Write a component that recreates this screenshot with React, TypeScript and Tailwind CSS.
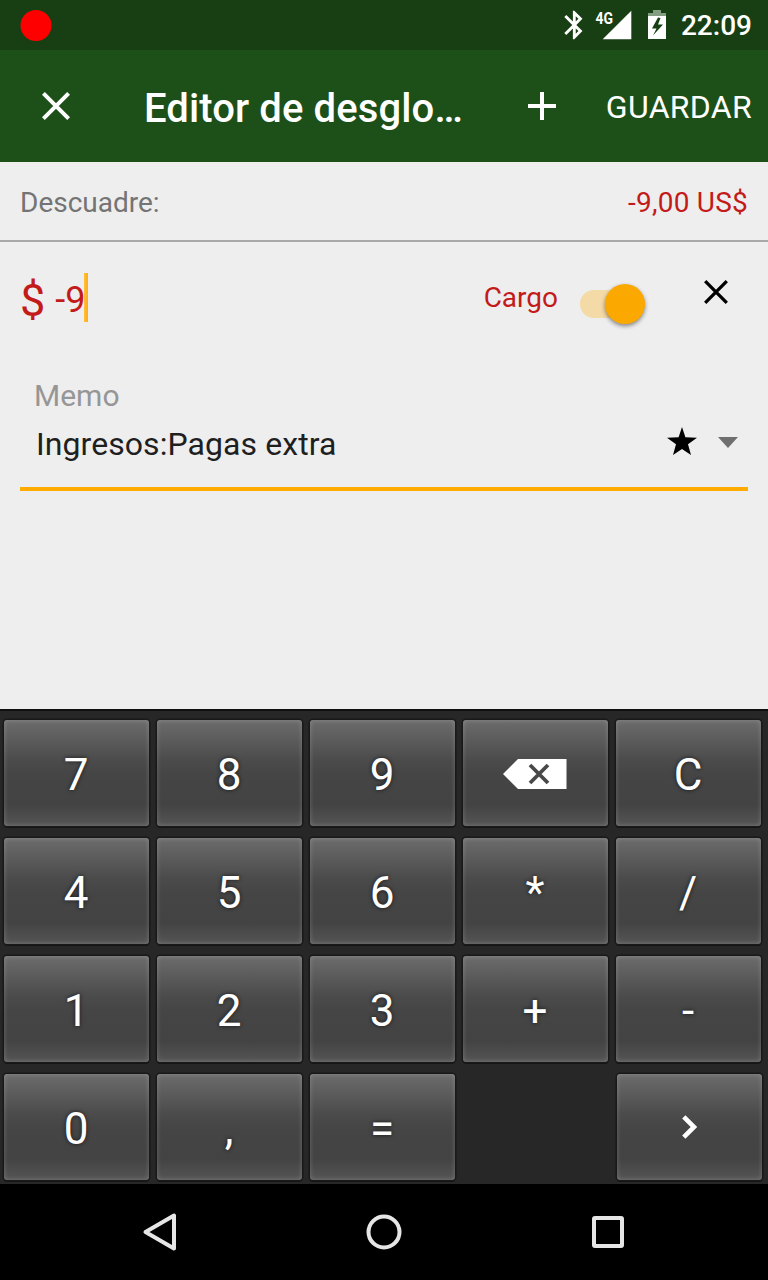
import React from "react";

const KEY =
  "flex h-[106px] w-[145px] items-center justify-center rounded-[3px] bg-[linear-gradient(180deg,#6c6c6c_0%,#5e5e5e_16%,#4b4b4b_38%,#454545_52%,#434343_80%,#555555_100%)] text-[44px] leading-none text-white shadow-[inset_0_0_5px_rgba(255,255,255,0.22),0_0_0_1.5px_#191919,0_2px_0_#141414]";

function Key({ label }: { label: string }) {
  return (
    <button className={KEY}>
      <span className="pr-px pt-1 [text-shadow:0_0_4px_rgba(0,0,0,0.7)]">{label}</span>
    </button>
  );
}

function Backspace() {
  return (
    <button className={KEY} aria-label="Borrar">
      <svg width="64" height="30" viewBox="0 0 64 30" className="mr-px mt-0.5 block">
        <path d="M0 15 15 0H63.5V30H15Z" fill="#fff" />
        <path d="M27 6 45 24M45 6 27 24" stroke="#484848" strokeWidth="3.8" />
      </svg>
    </button>
  );
}

function StatusBar() {
  return (
    <div className="flex h-[50px] items-center bg-[#173f13] pl-[21px] pr-4 text-white">
      <div className="mr-px size-[31px] -translate-x-[0.5px] rounded-full bg-[#ff0000]" />
      <svg width="104" height="50" viewBox="0 0 104 50" className="ml-auto block">
        <path
          transform="translate(-4.85 7.8) scale(1.43)"
          d="M17.71 7.71 12 2h-1v7.59L6.41 5 5 6.41 10.59 12 5 17.59 6.41 19 11 14.41V22h1l5.71-5.71-4.3-4.29 4.3-4.29zM13 5.83l1.88 1.88L13 9.59V5.83zm1.88 10.46L13 18.17v-3.76l1.88 1.88z"
          fill="#fff"
        />
        <path d="M69.3 10.7V39.3H40.7Z" fill="#fff" />
        <text x="33.5" y="23.5" fontSize="16.5" fontWeight="700" textLength="17.5" lengthAdjust="spacingAndGlyphs" fill="#fff">4G</text>
        <path d="M91 10H99V13H104.5V16H86V13H91Z" fill="#839d81" />
        <path d="M86 16H104.5V39H86Z" fill="#fff" />
        <path d="M96 17.5 90 28.5H94.5L91 35.5 101 24.5H96L98.5 18Z" fill="#173f13" />
      </svg>
      <span className="ml-[15px] pt-px text-[28px] font-medium leading-none">22:09</span>
    </div>
  );
}

function AppBar() {
  return (
    <header className="flex h-[112px] items-center bg-[#1d5018] pl-[42px] pr-4 text-white">
      <svg width="28" height="28" viewBox="0 0 28 28" className="block">
        <path d="M1.4 1.4 26.6 26.6M26.6 1.4 1.4 26.6" stroke="#fff" strokeWidth="4" />
      </svg>
      <h1 className="ml-[74px] w-[384px] whitespace-nowrap pt-[5px] text-[40px] font-medium leading-none tracking-[0.11px]">Editor de desglo…</h1>
      <svg width="28" height="28" viewBox="0 0 28 28" className="block">
        <path d="M14 0V28M0 14H28" stroke="#fff" strokeWidth="4" />
      </svg>
      <button className="ml-auto pt-0.5 text-[32px] leading-none tracking-[0.3px]">GUARDAR</button>
    </header>
  );
}

function SplitEntry() {
  return (
    <section className="h-[467px] px-5">
      <div className="flex h-[121px] items-center">
        <div className="flex items-center text-[#c31b19]">
          <span className="-translate-y-0.5 text-[45px] leading-none">$</span>
          <span className="-mr-px ml-[10px] -translate-y-[3px] text-[36px] leading-none">-9</span>
          <span className="h-[49px] w-1 -translate-y-[5px] bg-[linear-gradient(90deg,#ffbf3d,#ffae10)]" />
        </div>
        <span className="ml-auto -mt-[10px] text-[28px] leading-none text-[#c31b19]">Cargo</span>
        <div className="ml-[22px] mt-0.5 flex h-7 w-[65px] items-center justify-end">
          <div className="-mr-10 h-7 w-[65px] rounded-full bg-[#f4daa6]" />
          <div className="relative size-10 shrink-0 rounded-full bg-[#fba900] shadow-[0_2px_4px_rgba(0,0,0,0.45)]" />
        </div>
        <svg width="24" height="24" viewBox="0 0 24 24" className="-mt-[21px] ml-[59px] mr-5 block">
          <path d="M1.2 1.2 22.8 22.8M22.8 1.2 1.2 22.8" stroke="#000" strokeWidth="3.3" />
        </svg>
      </div>
      <div className="flex h-[66px] items-center pl-[14px] text-[30px] leading-none text-[#969696]">Memo</div>
      <div className="flex h-[62px] items-center border-b-4 border-[#ffab00] pb-[29px] pl-4 pr-[10px]">
        <span className="text-[32px] leading-none tracking-[0.07px] text-[#1f1f1f]">Ingresos:Pagas extra</span>
        <svg width="30" height="28" viewBox="0 0 30 28" className="-mt-[5px] ml-auto block">
          <path d="M15 0 18.4 10.2 30 10.7 21 17.3 24 28 15 22 6 28 9 17.3 0 10.7 11.6 10.2Z" fill="#000" />
        </svg>
        <svg width="20" height="11" viewBox="0 0 20 11" className="-mt-[3px] ml-[21px] block">
          <path d="M0 0H20L10 11Z" fill="#6f6f6f" />
        </svg>
      </div>
    </section>
  );
}

function Keyboard() {
  return (
    <div className="h-[475px] border-t-2 border-[#101010] bg-[#272727] pl-1 pt-[9px]">
      <div className="grid grid-cols-[repeat(5,145px)] gap-x-2 gap-y-3">
        <Key label="7" /><Key label="8" /><Key label="9" /><Backspace /><Key label="C" />
        <Key label="4" /><Key label="5" /><Key label="6" /><Key label="*" /><Key label="/" />
        <Key label="1" /><Key label="2" /><Key label="3" /><Key label="+" /><Key label="-" />
        <Key label="0" /><Key label="," /><Key label="=" /><span />
        <div className="pl-px">
          <button className={KEY} aria-label="Siguiente">
            <svg width="15" height="24" viewBox="0 0 15 24" className="block">
              <path d="M1.8 1.8 12 12 1.8 22.2" fill="none" stroke="#fff" strokeWidth="4.6" />
            </svg>
          </button>
        </div>
      </div>
    </div>
  );
}

function NavBar() {
  return (
    <nav className="grid h-24 grid-cols-[48px_224px_224px_224px_48px] items-center justify-items-center bg-black">
      <span />
      <svg width="36" height="40" viewBox="0 0 36 40" className="block">
        <path d="M3.5 20 32 3.5V36.5Z" fill="none" stroke="#e6e6e6" strokeWidth="4" strokeLinejoin="round" />
      </svg>
      <svg width="36" height="36" viewBox="0 0 36 36" className="block">
        <circle cx="18" cy="18" r="15.5" fill="none" stroke="#e6e6e6" strokeWidth="4" />
      </svg>
      <svg width="32" height="32" viewBox="0 0 32 32" className="block">
        <rect x="2" y="2" width="28" height="28" rx="1" fill="none" stroke="#e6e6e6" strokeWidth="4" />
      </svg>
      <span />
    </nav>
  );
}

export default function App() {
  return (
    <div className="flex h-[1280px] w-[768px] flex-col overflow-hidden bg-[#eeeeee] font-[Roboto,sans-serif]">
      <StatusBar />
      <AppBar />
      <div className="flex h-20 items-center justify-between border-b-2 border-[#a9a9a9] px-5 pt-1 text-[28px] leading-none">
        <span className="text-[#747474]">Descuadre:</span>
        <span className="tracking-[0.22px] text-[#c31b19]">-9,00 US$</span>
      </div>
      <SplitEntry />
      <Keyboard />
      <NavBar />
    </div>
  );
}
